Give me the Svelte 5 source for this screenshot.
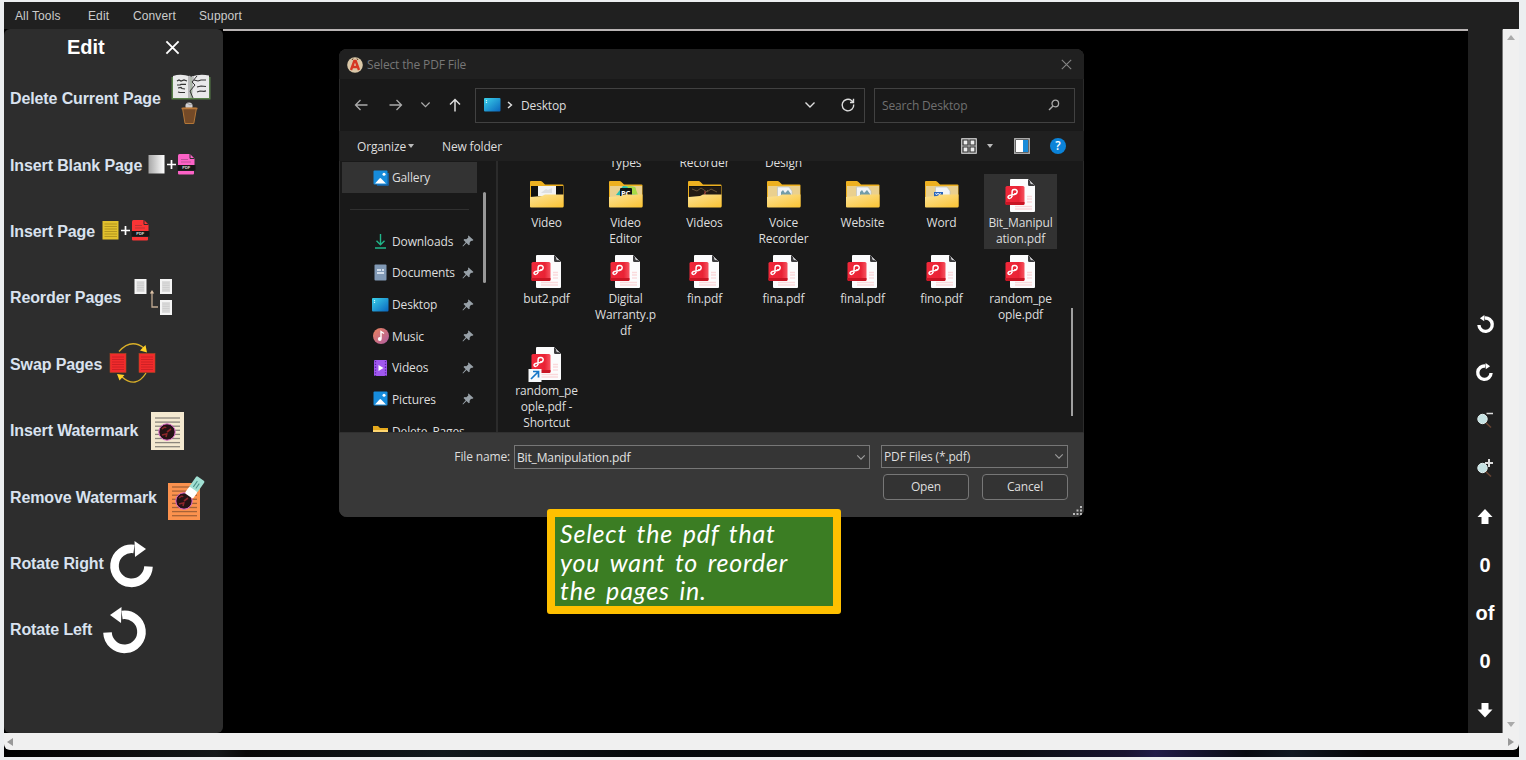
<script>
  const menus = [
    { t: 'All Tools', w: 73 },
    { t: 'Edit', w: 45 },
    { t: 'Convert', w: 66 },
    { t: 'Support', w: 60 }
  ];
  const tools = [
    { t: 'Delete Current Page', k: 'delete', w: 147, gap: 14 },
    { t: 'Insert Blank Page', k: 'blank', w: 129, gap: 9 },
    { t: 'Insert Page', k: 'insert', w: 83, gap: 9 },
    { t: 'Reorder Pages', k: 'reorder', w: 109, gap: 14 },
    { t: 'Swap Pages', k: 'swap', w: 90, gap: 9 },
    { t: 'Insert Watermark', k: 'mark', w: 125, gap: 14 },
    { t: 'Remove Watermark', k: 'unmark', w: 143, gap: 13 },
    { t: 'Rotate Right', k: 'right', w: 89, gap: 11 },
    { t: 'Rotate Left', k: 'left', w: 79, gap: 11 }
  ];
  const places = ['Downloads', 'Documents', 'Desktop', 'Music', 'Videos', 'Pictures', 'Delete_Pages'];
  const rows = [
    { h: 19, items: [null, { l: ['Types'] }, { l: ['Recorder'] }, { l: ['Design'] }] },
    {
      h: 76,
      items: [
        { k: 'folder', v: 'film', l: ['Video'] },
        { k: 'folder', v: 'editor', l: ['Video', 'Editor'] },
        { k: 'folder', v: 'photo', l: ['Videos'] },
        { k: 'folder', v: 'doc', l: ['Voice', 'Recorder'] },
        { k: 'folder', v: 'web', l: ['Website'] },
        { k: 'folder', v: 'word', l: ['Word'] },
        { k: 'pdf', sel: true, l: ['Bit_Manipul', 'ation.pdf'] }
      ]
    },
    {
      h: 92,
      items: [
        { k: 'pdf', l: ['but2.pdf'] },
        { k: 'pdf', l: ['Digital', 'Warranty.p', 'df'] },
        { k: 'pdf', l: ['fin.pdf'] },
        { k: 'pdf', l: ['fina.pdf'] },
        { k: 'pdf', l: ['final.pdf'] },
        { k: 'pdf', l: ['fino.pdf'] },
        { k: 'pdf', l: ['random_pe', 'ople.pdf'] }
      ]
    },
    { h: 90, items: [{ k: 'pdf', link: true, l: ['random_pe', 'ople.pdf -', 'Shortcut'] }] }
  ];
  const lines = (y, n, s) => Array.from({ length: n }, (_, i) => y + i * s);
</script>

{#snippet rotate(size)}
  <svg width={size} height={size} viewBox="0 0 46 46">
    <path d="M38.5 25.5A17 17 0 1 1 24 8" fill="none" stroke="#fff" stroke-width="8.6" />
    <path d="M24.5 0L36 8L25 16Z" fill="#fff" />
  </svg>
{/snippet}

{#snippet pdfSheet(c)}
  <g transform="translate(30 0)">
    <path d="M0 1.5Q0 0 1.5 0H12L16.500 4.500V11H0Z" fill={c} />
    <path d="M12 0V4.500H16.500" fill="none" stroke="#2d2d2d" stroke-width="1" />
    <path d="M3 5.500H10M3 8H13" stroke="#2d2d2d" stroke-opacity=".3" />
    <rect x="-.5" y="11" width="18" height="5.500" fill="#161616" />
    <text x="8.300" y="15.300" font-size="4" font-weight="700" text-anchor="middle" fill="#ddd">PDF</text>
    <path d="M0 17H16V19.500Q16 20.500 15 20.500H1Q0 20.500 0 19.500Z" fill={c} />
  </g>
{/snippet}

{#snippet toolIcon(k)}
  {#if k === 'delete'}
    <svg width="40" height="50" viewBox="0 0 40 50">
      <path d="M.5 3H39.500V25.500H.5Z" fill="#577f48" />
      <path d="M2 2Q10-.5 19.500 2.500V24H2ZM20.500 2.500Q29-.5 38 1.500V24H20.500Z" fill="#e9e9ea" />
      <path d="M17 2Q20 1 19.500 3V24H17ZM20.500 3L23 2 21 24Z" fill="#b9b9bb" />
      <path d="M6 7l2-1 2 1 3-1 3 1M6 11h3l1-.6h5M7 14l3-.5 1 1 3 .5M7 18l2 .5h5M23 6l4 1 3-1h5M26 13l4-1 5 .5M26 18l3-1 4 .4 2-.5" stroke="#333" fill="none" stroke-width="1.200" />
      <path d="M26 2L21 8 24 11 19 17 22 24" stroke="#333" fill="none" stroke-width="1" />
      <circle cx="18" cy="32" r="3.600" fill="#cfcfd1" /><path d="M16 29l3 2 2-1" stroke="#999" fill="none" />
      <path d="M11.500 34H25.500L22.800 49.500H14Z" fill="#744a27" stroke="#b37738" />
      <path d="M10.500 34.500H26.500" stroke="#b9793a" stroke-width="1.500" />
    </svg>
  {:else if k === 'blank' || k === 'insert'}
    <svg width="48" height="22" viewBox="0 0 48 22">
      <defs><linearGradient id="paper"><stop stop-color="#a7a7a7" /><stop offset="1" stop-color="#fff" /></linearGradient></defs>
      <rect y="1" x=".5" width="16" height="18.500" fill={k === 'blank' ? 'url(#paper)' : '#e1c02d'} />
      {#if k === 'insert'}
        {#each lines(4, 6, 2.5) as y}<path d={`M2.500 ${y}H15`} stroke="#af911e" stroke-width=".9" />{/each}
      {/if}
      <path d="M19 10.500H28M23.500 6V15" stroke="#fff" stroke-width="1.700" />
      {@render pdfSheet(k === 'blank' ? '#fb62c6' : '#f93435')}
    </svg>
  {:else if k === 'reorder'}
    <svg width="40" height="38" viewBox="0 0 40 38">
      {#each [[1.5, 1], [27, 1], [27, 22]] as [x, y]}
        <rect {x} {y} width="12" height="15" fill="#f4f4f4" />
        <rect x={x + 2} y={y + 2} width="8" height="11" fill="#dcdcdc" />
        {#each lines(y + 4, 4, 2.3) as ly}<path d={`M${x + 2.5} ${ly}h7`} stroke="#c5c5c5" stroke-width=".7" />{/each}
      {/each}
      <path d="M19 14V29H25" fill="none" stroke="#c1aa92" stroke-width="1.300" /><path d="M16.800 15.500L19 12 21.200 15.500Z" fill="#dfc4a8" />
    </svg>
  {:else if k === 'swap'}
    <svg width="48" height="40" viewBox="0 0 48 40">
      {#each [1, 30] as x}
        <rect {x} y="10.500" width="16" height="19" fill="#f12b2c" stroke="#ae471f" stroke-width=".6" />
        {#each lines(14, 6, 2.5) as y}<path d={`M${x + 2} ${y}h12`} stroke="#c51e23" stroke-width=".8" />{/each}
      {/each}
      <path d="M10 8.500Q22-5 35 5M37 30Q27 46 13 34" fill="none" stroke="#d9af28" stroke-width="1.400" />
      <path d="M31 7.500L36.500 2 38 9.500ZM8 31L15.500 32 10.500 37.500Z" fill="#ffd126" />
    </svg>
  {:else if k === 'mark' || k === 'unmark'}
    <svg width={k === 'mark' ? 36 : 42} height="44" viewBox={k === 'mark' ? '0 2 36 44' : '0 0 42 44'}>
      <rect x="2" y={k === 'mark' ? 5 : 7} width={k === 'mark' ? 33 : 32} height={k === 'mark' ? 38 : 37} fill={k === 'mark' ? '#f4e9d0' : '#fc924e'} />
      {#each lines(11, 8, 4.1) as y}<path d={`M6 ${y}H31`} stroke={k === 'mark' ? '#8b867c' : '#a66237'} stroke-width="1.300" />{/each}
      <circle cx="18" cy="25" r="8.200" fill="#241315" stroke="#e36ad0" stroke-width="1" />
      <path d="M13 22q3-3 4-1M18 25l4-3M13 28l4-1M17 30l1-4" stroke="#8d252a" stroke-width="1.600" fill="none" />
      {#if k === 'unmark'}
        <g transform="translate(29 12) rotate(35)"><rect x="-5.500" y="-11" width="10" height="14" rx="1.500" fill="#a0dfd2" /><rect x="-5.500" y="2" width="10" height="8" rx="1.500" fill="#fff" /><path d="M-2-7V0M1-6V0" stroke="#4b9189" /></g>
      {/if}
    </svg>
  {:else}
    <span class:flip={k === 'left'}>{@render rotate(46)}</span>
  {/if}
{/snippet}

{#snippet monitor()}
  <svg width="17" height="14" viewBox="0 0 17 14"><defs><linearGradient id="desk" x2="1" y2="1"><stop stop-color="#3bd2ea" /><stop offset="1" stop-color="#0965bd" /></linearGradient></defs><rect width="16.500" height="13.500" rx="1" fill="url(#desk)" /><path d="M2.500 2v3" stroke="#c9f7ff" stroke-width="1.200" stroke-dasharray="1.200 .8" /></svg>
{/snippet}

{#snippet placeIcon(k)}
  {#if k === 'Downloads'}
    <svg width="13" height="16" viewBox="0 0 13 16"><path d="M6.500 1V11.500M2.500 7.700L6.500 11.700 10.500 7.700M1 15H12" fill="none" stroke="#20b68a" stroke-width="1.400" /></svg>
  {:else if k === 'Documents'}
    <svg width="13" height="17" viewBox="0 0 13 17"><rect x=".5" y=".5" width="12" height="16" rx="1" fill="#8199b5" /><path d="M3 6H7M3 9H10M8 6h2" stroke="#edf4fb" stroke-width="1.300" /></svg>
  {:else if k === 'Desktop'}
    {@render monitor()}
  {:else if k === 'Music'}
    <svg width="16" height="16" viewBox="0 0 16 16"><defs><linearGradient id="music" x2="1" y2="1"><stop stop-color="#eb845c" /><stop offset="1" stop-color="#ad5ba1" /></linearGradient></defs><circle cx="8" cy="8" r="8" fill="url(#music)" /><path d="M8 10.500V3.500L11 5.500" fill="none" stroke="#fff" stroke-width="1.400" /><circle cx="6.800" cy="11" r="1.900" fill="#fff" /></svg>
  {:else if k === 'Videos'}
    <svg width="13" height="16" viewBox="0 0 13 16"><rect width="13" height="16" rx="1" fill="#a158ef" /><path d="M1.500 1V16M11.500 1V16" stroke="#5c22a9" stroke-width="1.300" stroke-dasharray="1.300 1.500" /><path d="M4.500 5L9.500 8 4.500 11Z" fill="#fff" /></svg>
  {:else if k === 'Pictures' || k === 'Gallery'}
    <svg width="16" height="16" viewBox="0 0 16 16">{#if k === 'Gallery'}<path d="M4 3H16V14.500Q16 16 14.500 16H4Z" fill="#175b98" />{/if}<rect x=".5" y=".5" width="14" height="14" rx="1" fill="#178cdc" /><path d="M2 13.500L6.500 8.500Q7.300 7.600 8.100 8.500L13 13.500Z" fill="#fff" /><circle cx="11" cy="4.300" r="1.500" fill="#fff" /></svg>
  {:else}
    <svg width="15" height="13" viewBox="0 0 15 13"><path d="M0 1H5L7 3H15V13H0Z" fill="#e5a91d" /><path d="M0 5H15V13H0Z" fill="#ffd66f" /></svg>
  {/if}
{/snippet}

{#snippet fileIcon(f)}
  {#if f.k === 'folder'}
    <svg width="34" height="28" viewBox="0 0 34 28">
      <defs><linearGradient id="front" x2=".8" y2="1"><stop stop-color="#fce397" /><stop offset="1" stop-color="#fbc63c" /></linearGradient></defs>
      <path d="M0 2Q0 1 1 1H10.500Q11.500 1 12.500 2L15 4.500H32.500Q33.500 4.500 33.500 5.500V26.500H0Z" fill="#edb020" />
      <path d="M1 6H33V18H1Z" fill={f.v === 'film' || f.v === 'photo' ? '#111' : '#ead08e'} />
      {#if f.v === 'film'}<rect x="8" y="6" width="18" height="10" fill="#f3f3f3" /><path d="M12 12l4-3 2 1 4-2v5H11Z" fill="#dedfe1" />
      {:else if f.v === 'editor'}<path d="M7 15L14 6 26 7 28 16Z" fill="#28bfb0" /><path d="M18 6L26 7 29 15 22 14Z" fill="#a8db46" /><rect x="11" y="8" width="12" height="9" rx="1" fill="#101515" /><text x="12" y="15.500" font-size="7.500" font-weight="700" fill="#fff">PC</text>
      {:else if f.v === 'photo'}<path d="M1 7H33V16H1Z" fill="#221b14" /><path d="M4 9l5 2 4-3 6 4 4-3 6 3M16 14l4-4" stroke="#655237" stroke-width="1" fill="none" /><path d="M17 11v5" stroke="#ad3e3d" />
      {:else}<path d="M10.500 7H22L25 11V18H10.500Z" fill="#f2f4f6" stroke="#b4bdc4" stroke-width=".6" /><path d={f.v === 'word' ? 'M9 12H18V18H9Z' : 'M14 12l2-2 2 3 3-3 3 4v3H14Z'} fill={f.v === 'word' ? '#2865be' : '#729ca9'} />{#if f.v === 'word'}<path d="M10.500 13l1 2 1.500-2 1.500 2 1-2" stroke="#fff" fill="none" stroke-width=".8" />{/if}{/if}
      <path d="M0 17L12 16 15 14.500H33.500V26.500Q33.500 27.500 32.500 27.500H1Q0 27.500 0 26.500Z" fill="url(#front)" />
    </svg>
  {:else}
    <svg width="34" height="36" viewBox="0 0 34 36">
      <defs><linearGradient id="badge"><stop stop-color="#f1283a" /><stop offset=".7" stop-color="#e92335" /><stop offset="1" stop-color="#f65360" /></linearGradient></defs>
      <path d="M7 1H24L31 8V33Q31 34 30 34H7Q6 34 6 33V2Q6 1 7 1Z" fill="#fcfcfd" />
      <path d="M24 1V6.500Q24 8 25.500 8H31Z" fill="#d2d2d5" /><path d="M24 1V6.500Q24 8 25.500 8H31L29 6Q26 7 26 3Z" fill="#3b3b3d" />
      <path d="M23 18.500H28M23 21H28M11 28.500H28M11 31H28" stroke="#fad9dc" stroke-width="1.300" />
      <path d="M23 24H28" stroke="#fad9dc" stroke-width="1.300" />
      <rect x="1.500" y="8" width="19" height="19" rx="1.500" fill="url(#badge)" /><path d="M1.500 24H20.500V25.500Q20.500 27 19 27H3Q1.500 27 1.500 25.500Z" fill="#c91524" />
      <path d="M8 19C8 11 8 11.500 11 11.500S14 16 10.500 16.500S4 17 4 19S7.500 21 8 18M10 16L13 15.500" fill="none" stroke="#fff" stroke-width="1.500" />
      {#if f.link}<rect x="-1.500" y="23" width="13" height="13" fill="#f7f9fb" /><path d="M1 33L8.500 25.500M3 25.500H8.500V31.500" fill="none" stroke="#1676c8" stroke-width="1.700" />{/if}
    </svg>
  {/if}
{/snippet}

{#snippet chevron(w = 12)}
  <svg width={w} height={w / 2 + 2} viewBox="0 0 12 8"><path d="M1.500 1.500L6 6 10.500 1.500" fill="none" stroke="currentColor" stroke-width="1.400" /></svg>
{/snippet}

<div class="page">
  <div class="window">
    <nav class="menubar">
      {#each menus as m}<span style:width={`${m.w}px`}>{m.t}</span>{/each}
    </nav>
    <div class="middle">
      <aside class="sidebar">
        <header><b>Edit</b><svg width="16" height="16" viewBox="0 0 16 16"><path d="M1.500 1.500L14.500 14.500M14.500 1.500L1.500 14.500" stroke="#fff" stroke-width="2" /></svg></header>
        {#each tools as t}
          <div class="tool">
            <span class="name" style:width={`${t.w}px`}>{t.t}</span>
            <span class="icon {t.k}" style:margin-left={`${t.gap}px`}>{@render toolIcon(t.k)}</span>
          </div>
        {/each}
      </aside>
      <main></main>
      <aside class="rail">
        <span class="chip flip">{@render rotate(18)}</span>
        <span class="chip">{@render rotate(18)}</span>
        {#each ['minus', 'plus'] as z}
          <span><svg width="20" height="22" viewBox="0 0 20 22"><path d="M9 12L16 18.500" stroke="#694433" stroke-width="1.600" /><circle cx="7.500" cy="10" r="4.700" fill="#c6e2e3" stroke="#e2f2f2" /><path d={z === 'minus' ? 'M11.500 4.500H18' : 'M10 5H18M14 1V9'} stroke="#ddd" stroke-width={z === 'minus' ? 1.5 : 2} /></svg></span>
        {/each}
        <span><svg width="16" height="16" viewBox="0 0 16 16"><path d="M8 0L15.500 8H11.500V15H4.500V8H.5Z" fill="#fff" /></svg></span>
        <span>0</span><span>of</span><span>0</span>
        <span><svg width="16" height="16" viewBox="0 0 16 16"><path d="M8 15.500L15.500 7.500H11.500V1H4.500V7.500H.5Z" fill="#fff" /></svg></span>
      </aside>
      <div class="vbar"><i class="up"></i><i class="down"></i></div>
    </div>
    <div class="hbar"><i class="lt"></i><i class="rt"></i></div>
    <div class="desk"></div>
  </div>

  <section class="dialog">
    <div class="titlebar">
      <svg width="16" height="16" viewBox="0 0 16 16"><circle cx="8" cy="8" r="7.800" fill="#dac8a8" /><path d="M4 13L7.300 4H8.700L12 13M5.500 10H10.500" fill="none" stroke="#d63824" stroke-width="2.400" /><path d="M5 3L6 1.500M11 3L10 1.500" stroke="#58391f" /></svg>
      <span class="title">Select the PDF File</span>
      <svg width="11" height="11" viewBox="0 0 11 11"><path d="M.8.8L10.200 10.200M10.200.8L.8 10.200" stroke="#858585" stroke-width="1.100" /></svg>
    </div>
    <div class="navrow">
      <div class="arrows">
        <svg width="14" height="14" viewBox="0 0 14 14"><path d="M13.500 7H1.500M6.500 2L1.500 7 6.500 12" /></svg>
        <svg width="14" height="14" viewBox="0 0 14 14"><path d="M.5 7H12.500M7.500 2L12.500 7 7.500 12" /></svg>
        {@render chevron(11)}
        <svg class="bright" width="14" height="14" viewBox="0 0 14 14"><path d="M7 13.500V1.500M2 6.500L7 1.500 12 6.500" /></svg>
      </div>
      <div class="path">
        {@render monitor()}
        <svg class="sep" width="6" height="8" viewBox="0 0 6 8"><path d="M1 1L4.500 4 1 7" fill="none" stroke="#ddd" stroke-width="1.400" /></svg>
        <span class="crumb">Desktop</span>
        {@render chevron(12)}
        <svg class="reload" width="14" height="14" viewBox="0 0 14 14"><path d="M12.700 6.500A5.800 5.800 0 1 1 10.500 2.500L12 4M12.500.8V4.500H9" fill="none" stroke="#ddd" stroke-width="1.400" /></svg>
      </div>
      <div class="search"><span>Search Desktop</span><svg width="12" height="12" viewBox="0 0 12 12"><circle cx="7.300" cy="4.500" r="3.300" fill="none" stroke="#aaa" stroke-width="1.300" /><path d="M5 7L1 11" stroke="#aaa" stroke-width="1.500" /></svg></div>
    </div>
    <div class="commands">
      <span class="org">Organize</span><i class="tri"></i><span class="newf">New folder</span>
      <svg class="view" width="16" height="16" viewBox="0 0 16 16"><rect width="16" height="16" rx="1" fill="#bbb" /><path d="M2 2h5v5H2ZM9 2h5v5H9ZM2 9h5v5H2ZM9 9h5v5H9Z" fill="#eee" stroke="#333" stroke-width="1.200" /></svg>
      <i class="tri two"></i>
      <svg class="pane" width="16" height="16" viewBox="0 0 16 16"><rect width="16" height="16" rx=".5" fill="#aaa" /><rect x="1.500" y="1.500" width="13" height="13" fill="#222" /><path d="M2 2H9V14H2Z" fill="#fff" /><path d="M9 2H14V14H9Z" fill="#198bd9" /></svg>
      <span class="help">?</span>
    </div>
    <div class="body">
      <div class="tree">
        <div class="place gallery"><span class="pic">{@render placeIcon('Gallery')}</span><span>Gallery</span></div>
        <hr />
        {#each places as p, i}
          <div class="place"><span class="pic">{@render placeIcon(p)}</span><span class="pl">{p}</span>
            {#if i < 6}<svg class="pin" width="12" height="12" viewBox="0 0 12 12"><path d="M6.500.5L11.500 5 10 6 9 5.800 7.500 8 7.800 9.500 6.800 10.200 4.500 8 1 11.500.5 11 3.700 7.200 1.500 5 2.500 4 4.300 4.200 6.300 2.500 6 1Z" fill="#98a1a8" /></svg>{/if}
          </div>
        {/each}
      </div>
      <div class="treebar"><i></i></div>
      <div class="files">
        {#each rows as r}
          <div class="row" style:height={`${r.h}px`}>
            {#each r.items as f}
              <div class="file" class:sel={f?.sel}>
                {#if f}
                  {#if f.k}<div class="art {f.k}">{@render fileIcon(f)}</div>{/if}
                  {#each f.l as s}<div>{s}</div>{/each}
                {/if}
              </div>
            {/each}
          </div>
        {/each}
      </div>
      <div class="filebar"><i></i></div>
    </div>
    <footer>
      <div class="line"><span class="fn">File name:</span><div class="field name">Bit_Manipulation.pdf{@render chevron(10)}</div><div class="field kind"><span>PDF Files (*.pdf)</span>{@render chevron(10)}</div></div>
      <div class="btns"><div class="btn">Open</div><div class="btn">Cancel</div></div>
      <svg class="grip" width="10" height="10" viewBox="0 0 10 10"><path d="M0 7h2v2H0ZM3.500 7h2v2h-2ZM7 7h2v2H7ZM3.500 3.500h2v2h-2ZM7 3.500h2v2H7ZM7 0h2v2H7Z" fill="#bbb" /></svg>
    </footer>
  </section>

  <div class="callout">
    <div class="l1">Select the pdf that</div><div class="l2">you want to reorder</div><div class="l3">the pages in.</div>
  </div>
</div>

<style>
  :global(body) { margin: 0; background: #eceef1; overflow: hidden; }
  svg { display: block; flex: none; overflow: visible; }
  .page { position: relative; width: 1526px; height: 760px; box-sizing: border-box; padding: 2px 7px 3px 4px; background: #eceef0; font-family: "Liberation Sans", Arial, sans-serif; white-space: nowrap; }
  .window { display: flex; flex-direction: column; width: 1515px; height: 755px; background: #000; }
  .menubar { height: 27px; flex: none; display: flex; align-items: center; padding-left: 11px; background: #202020; color: #ccc; font-size: 12px; letter-spacing: .12px; box-sizing: border-box; }
  .middle { display: flex; height: 704px; flex: none; }
  .sidebar { width: 219px; box-sizing: border-box; background: #2d2d2d; border-radius: 6px; padding-left: 6px; }
  .sidebar header { height: 37px; display: flex; align-items: center; color: #fff; font-size: 20px; padding-left: 57px; box-sizing: border-box; }
  .sidebar header b { width: 98px; }
  .sidebar header svg { width: 15px; height: 15px; }
  .tool { height: 66.4px; display: flex; align-items: center; }
  .name { color: #d9e2ef; font-size: 16px; font-weight: 700; letter-spacing: -.12px; }
  .icon { display: flex; }
  .icon.reorder, .icon.swap { margin-top: -3px; }
  .icon.swap { margin-top: -4px; }
  .icon.insert, .icon.blank { margin-top: -1px; }
  .flip { transform: scaleX(-1); }
  main { width: 1245px; border-top: 2px solid #b9b4b4; box-sizing: border-box; background: #000; }
  .rail { width: 35px; box-sizing: border-box; background: #202020; border-right: 1px solid #777; border-top: 1px solid #202020; display: flex; flex-direction: column; padding-top: 270px; color: #fff; font-size: 20px; font-weight: 700; align-items: center; }
  .rail span { height: 48.200px; flex: none; display: flex; align-items: center; justify-content: center; }
  .vbar { width: 16px; background: #f0f0f0; display: flex; flex-direction: column; justify-content: space-between; align-items: center; padding: 6px 0; box-sizing: border-box; }
  .hbar { height: 17px; flex: none; background: #f0f0f0; border-radius: 0 0 6px 6px; display: flex; justify-content: space-between; align-items: center; padding: 0 5px 0 3px; }
  .vbar i, .hbar i { border: 4px solid transparent; }
  .vbar .up { border-bottom: 5px solid #aaa; border-top: 0; }
  .vbar .down { border-top: 5px solid #aaa; border-bottom: 0; }
  .hbar .lt { border-right: 6px solid #999; border-left: 0; }
  .hbar .rt { border-left: 6px solid #999; border-right: 0; }
  .desk { flex: 1; background: linear-gradient(90deg, #000 0, #080808 5%, #131719 14%, #070707 16%, #10181d 29%, #05080b 42%, #0a0d12 67%, #171430 74%, #211c48 76%, #080a10 82%, #101822 85%, #050506 90%, #000 100%); }

  .dialog { position: absolute; left: 339px; top: 49px; width: 745px; height: 468px; border-radius: 8px; overflow: hidden; background: #191919; box-shadow: inset 0 0 0 1px #2b2b2b; color: #dedede; font: 12px "Open Sans", "Noto Sans", sans-serif; letter-spacing: -.15px; display: flex; flex-direction: column; }
  .titlebar { height: 30px; flex: none; box-sizing: border-box; padding: 1px 12px 0 8px; display: flex; align-items: center; background: #202020; color: #777; }
  .title { margin-left: 4px; flex: 1; }
  .navrow { height: 52px; flex: none; display: flex; align-items: center; padding-left: 15px; }
  .arrows { width: 121px; display: flex; align-items: center; color: #999; }
  .arrows svg path { fill: none; stroke: #aaa; stroke-width: 1.300; }
  .arrows svg:nth-child(2) { margin-left: 21px; }
  .arrows svg:nth-child(3) { margin-left: 17px; }
  .arrows svg:nth-child(4) { margin-left: 17px; }
  .arrows .bright path { stroke: #ddd; stroke-width: 1.500; }
  .path, .search { height: 35px; box-sizing: border-box; border: 1px solid #414141; display: flex; align-items: center; }
  .path { width: 390px; padding-left: 8px; }
  .sep { margin: 0 8px 0 6px; }
  .crumb { width: 283px; }
  .reload { margin-left: 25px; }
  .search { margin-left: 9px; width: 201px; padding: 0 14px 0 7px; justify-content: space-between; color: #707070; }
  .commands { height: 30px; flex: none; display: flex; align-items: center; padding-left: 18px; background: #202020; }
  .org { width: 51px; }
  .tri { border: 3.500px solid transparent; border-top: 4px solid #bbb; border-bottom: 0; }
  .newf { margin-left: 28px; width: 62px; }
  .view { margin-left: 457px; }
  .two { margin-left: 10px; }
  .pane { margin-left: 21px; }
  .help { margin-left: 20px; width: 16px; height: 16px; border-radius: 50%; background: #0b83d9; color: #fff; text-align: center; line-height: 16px; font-weight: 600; }
  .body { height: 271px; flex: none; display: flex; overflow: hidden; }
  .tree { width: 135px; margin-left: 3px; flex: none; }
  .place { height: 31.640px; display: flex; align-items: center; }
  .place.gallery { height: 31px; margin-top: 1px; margin-bottom: 16px; background: #333; }
  .tree hr { margin: 0 8px 15.500px; border: 0; height: 1px; background: #303030; }
  .pic { width: 17px; margin: 0 3px 0 30px; display: flex; justify-content: center; }
  .pl { width: 70px; }
  .treebar { width: 18px; flex: none; border-right: 2px solid #2b2b2b; padding: 31px 0 0 6px; box-sizing: content-box; width: 13px; }
  .treebar i { display: block; width: 3px; height: 91px; background: #989898; border-radius: 2px; }
  .files { width: 564px; flex: none; padding-left: 9px; margin-top: -6px; line-height: 15.800px; text-align: center; }
  .row { display: flex; }
  .file { width: 73px; flex: none; margin: 0 3px; }
  .sel { background: #323232; height: 75px; }
  .art { height: 41px; display: flex; justify-content: center; }
  .art.folder svg { margin-top: 6px; }
  .art.pdf svg { margin-top: 4px; }
  .filebar { padding-top: 147px; }
  .filebar i { display: block; width: 2px; height: 108px; background: #a0a0a0; }
  footer { flex: 1; background: #383838; position: relative; padding: 12px 16px 0 0; border-top: 1px solid #303030; box-sizing: border-box; }
  .line { display: flex; height: 24px; }
  .fn { width: 171px; line-height: 23px; text-align: right; }
  .field { height: 24px; box-sizing: border-box; border: 1px solid #777; display: flex; align-items: center; justify-content: space-between; background: #353535; padding: 0 3px 0 2px; }
  .field.name { width: 356px; margin-left: 4px; color: #e3e3e3; font-size: 12px; font-weight: 400; letter-spacing: -.15px; }
  .field.kind { width: 187px; height: 23px; margin-left: 11px; }
  .field :global(svg) { opacity: .6; }
  .btns { display: flex; justify-content: flex-end; gap: 13px; margin-top: 5px; }
  .btn { width: 86px; height: 26px; box-sizing: border-box; border: 1px solid #777; border-radius: 4px; text-align: center; line-height: 24px; background: #333; }
  .grip { position: absolute; right: 1px; bottom: 1px; }
  .callout { position: absolute; left: 547px; top: 509px; width: 294px; height: 105px; box-sizing: border-box; border: 8px solid #ffc000; border-radius: 3px; background: #3b7d23; color: #fff; font: italic 25px/28.500px Lato, sans-serif; padding: 2px 5px; }
  .l1 { letter-spacing: .8px; word-spacing: 3px; }
  .l2 { letter-spacing: .8px; word-spacing: 3px; }
  .l3 { letter-spacing: .8px; word-spacing: 3px; }
</style>
